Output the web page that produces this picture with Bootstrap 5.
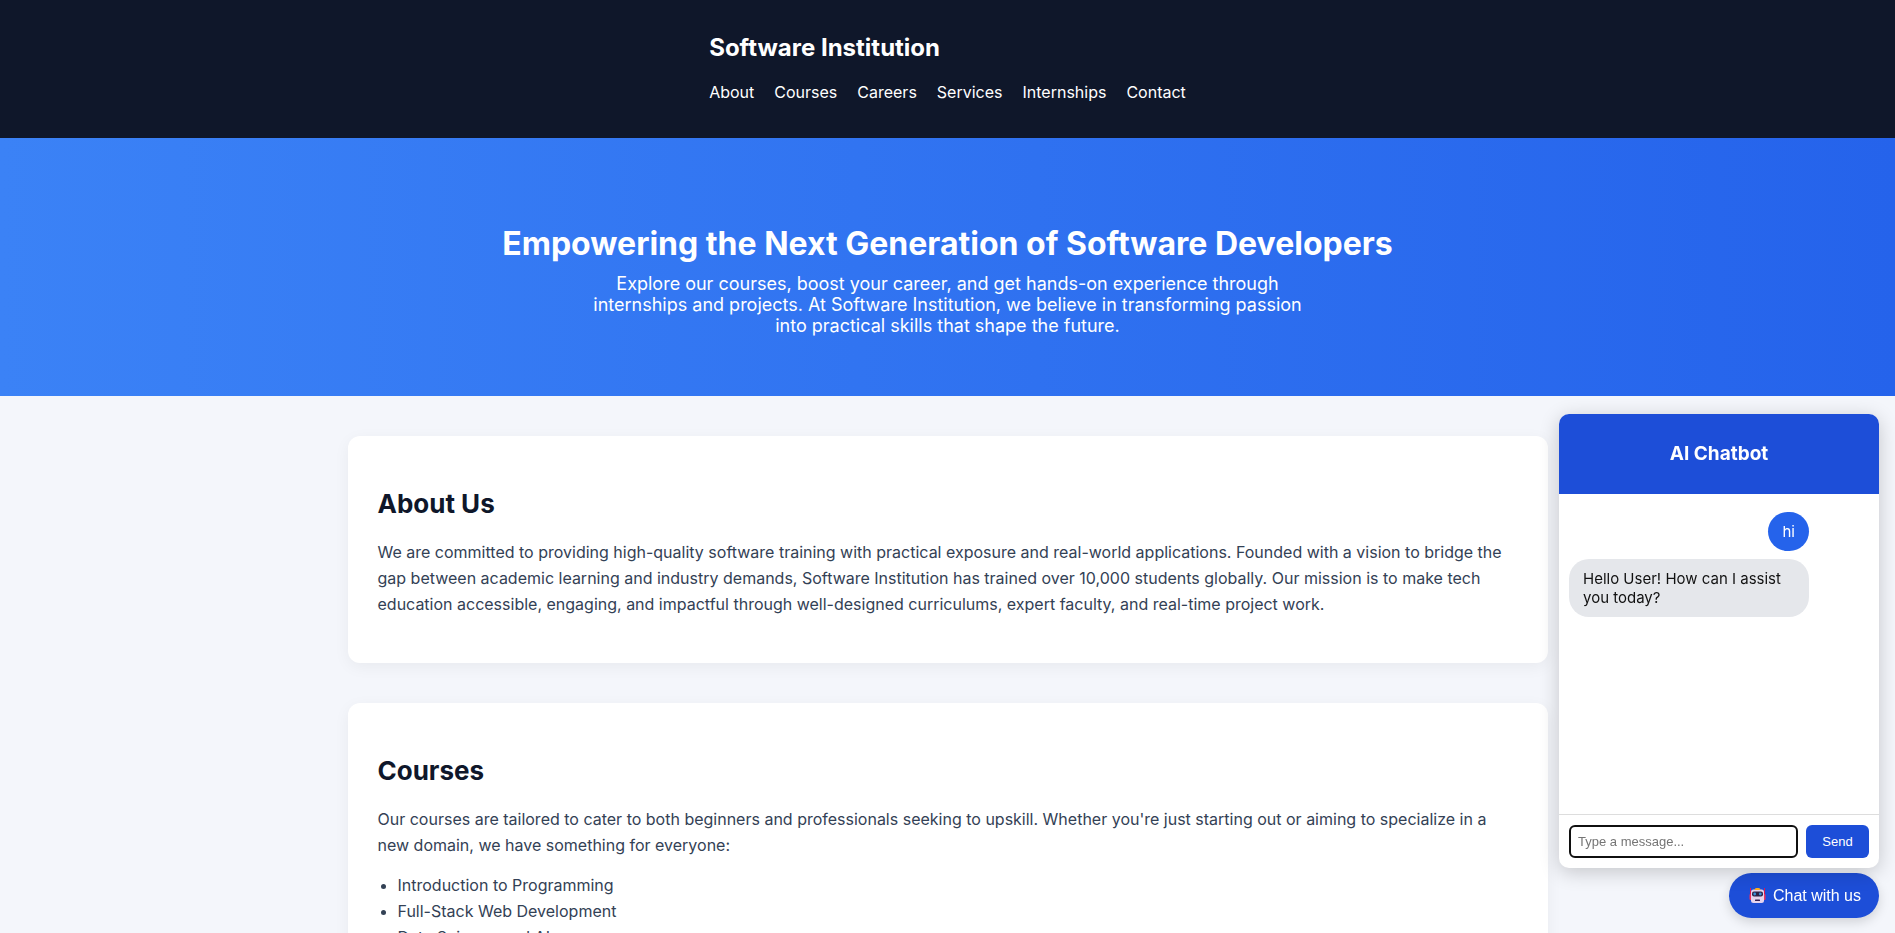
<!DOCTYPE html>
<html lang="en">
<head>
<meta charset="utf-8">
<meta name="viewport" content="width=device-width, initial-scale=1">
<title>Software Institution</title>
<link href="https://cdn.jsdelivr.net/npm/bootstrap@5.3.0/dist/css/bootstrap.min.css" rel="stylesheet">
<style>
  body { font-family: Inter, sans-serif; background: #f4f6fb; color: #1e293b; line-height: normal; }
  .site-header { background: #0f172a; padding: 33px 20px 35px; }
  .site-header h1 { font-size: 24px; line-height: 30px; font-weight: 700; margin-bottom: 18px; }
  .site-nav { column-gap: 20px; line-height: 22px; }
  .site-nav a { color: #fff; text-decoration: none; }
  .hero { background: linear-gradient(to right, #3b82f6, #2563eb); padding: 86px 20px 60px; }
  .hero h2 { font-size: 32px; line-height: 39px; font-weight: 700; margin-bottom: 10px; }
  .hero p { max-width: 720px; font-size: 18px; line-height: 21px; }
  .page-main { max-width: 1200px; padding: 40px 0; row-gap: 40px; }
  .panel { background: #fff; border-radius: 12px; box-shadow: 0 4px 16px rgba(0,0,0,.05); padding: 51px 30px 46px; line-height: 26px; color: #334155; }
  .panel h2 { font-size: 26px; line-height: 34px; font-weight: 700; color: #0f172a; margin-bottom: 18px; }
  .panel p { margin-bottom: 0; }
  .panel ul { margin: 14px 0 0; padding-left: 20px; }
  .chat-dock { right: 16px; bottom: 15px; row-gap: 5px; }
  .chat-box { z-index: 1; width: 320px; background: #fff; border-radius: 10px; box-shadow: 0 4px 20px rgba(0,0,0,.2); }
  .chat-title { background: #1d4ed8; color: #fff; font-size: 19px; line-height: 30px; padding: 25px 10px; font-weight: 700; margin: 0; }
  .chat-log { height: 320px; padding: 18px 10px; font-size: 15px; line-height: 19px; }
  .bubble { border-radius: 20px; padding: 10px 14px; }
  .bubble-user { background: #2563eb; color: #fff; margin-left: auto; }
  .bubble-bot { background: #e5e7eb; color: #111; }
  .chat-thread { width: 80%; row-gap: 8px; }
  .chat-form { border-top: 1px solid #ddd; padding: 10px; column-gap: 8px; font: 13px "Liberation Sans", sans-serif; }
  .chat-form input { min-width: 0; height: 33px; border: 2px solid #101010; border-radius: 6px; padding: 0 7px; outline: 0; }
  .chat-form input::placeholder { color: #757575; }
  .chat-form button { background: #1d4ed8; color: #fff; border: 0; border-radius: 6px; min-width: 63px; padding: 0 16px; }
  .chat-toggle { background: #1d4ed8; color: #fff; border: 0; border-radius: 30px; height: 45px; padding: 0 18px 0 20px; column-gap: 7px; font: 16px "Liberation Sans", sans-serif; box-shadow: 0 4px 12px rgba(0,0,0,.15); }
</style>
</head>
<body>
<header class="site-header text-white d-flex justify-content-center">
  <div>
    <h1>Software Institution</h1>
    <nav class="site-nav d-flex flex-wrap" aria-label="Main">
      <a href="#about">About</a>
      <a href="#courses">Courses</a>
      <a href="#careers">Careers</a>
      <a href="#services">Services</a>
      <a href="#internships">Internships</a>
      <a href="#contact">Contact</a>
    </nav>
  </div>
</header>

<section class="hero text-white text-center">
  <h2>Empowering the Next Generation of Software Developers</h2>
  <p class="mx-auto mb-0">Explore our courses, boost your career, and get hands-on experience through internships and projects. At Software Institution, we believe in transforming passion into practical skills that shape the future.</p>
</section>

<main class="page-main mx-auto d-flex flex-column">
  <section class="panel" id="about">
    <h2>About Us</h2>
    <p>We are committed to providing high-quality software training with practical exposure and real-world applications. Founded with a vision to bridge the gap between academic learning and industry demands, Software Institution has trained over 10,000 students globally. Our mission is to make tech education accessible, engaging, and impactful through well-designed curriculums, expert faculty, and real-time project work.</p>
  </section>
  <section class="panel" id="courses">
    <h2>Courses</h2>
    <p>Our courses are tailored to cater to both beginners and professionals seeking to upskill. Whether you're just starting out or aiming to specialize in a new domain, we have something for everyone:</p>
    <ul>
      <li>Introduction to Programming</li>
      <li>Full-Stack Web Development</li>
      <li>Data Science and AI</li>
    </ul>
  </section>
</main>

<aside class="chat-dock position-fixed d-flex flex-column align-items-end">
  <section class="chat-box position-relative overflow-hidden">
    <h3 class="chat-title text-center">AI Chatbot</h3>
    <div class="chat-log">
      <div class="chat-thread d-flex flex-column">
        <div class="bubble bubble-user">hi</div>
        <div class="bubble bubble-bot">Hello User! How can I assist you today?</div>
      </div>
    </div>
    <form class="chat-form d-flex">
      <input class="flex-grow-1" type="text" placeholder="Type a message..." aria-label="Type a message">
      <button type="button">Send</button>
    </form>
  </section>
  <button class="chat-toggle d-flex align-items-center" type="button">
    <svg width="17" height="17" viewBox="0 0 17 17" aria-hidden="true">
      <path d="M1.5 1v12M15.500 1v12" stroke="#e5164f" stroke-width="1"/>
      <rect x="0.500" y="7" width="2.500" height="6" rx="1" fill="#f0305f"/>
      <rect x="14" y="7" width="2.500" height="6" rx="1" fill="#f0305f"/>
      <rect x="2" y="2.500" width="13" height="13.500" rx="2.500" fill="#e5d3ee"/>
      <path d="M5.500 3q0-2 2-2h2q2 0 2 2z" fill="#ffb01f"/>
      <rect x="3" y="4.500" width="11" height="5" rx="2" fill="#2d2147"/>
      <circle cx="5.700" cy="7" r="1.400" fill="#3b8fd8"/>
      <circle cx="11.300" cy="7" r="1.400" fill="#3b8fd8"/>
      <rect x="6" y="12.500" width="5" height="1.500" rx=".5" fill="#37204f"/>
    </svg>
    <span>Chat with us</span>
  </button>
</aside>
<script src="https://cdn.jsdelivr.net/npm/bootstrap@5.3.0/dist/js/bootstrap.bundle.min.js"></script>
</body>
</html>
